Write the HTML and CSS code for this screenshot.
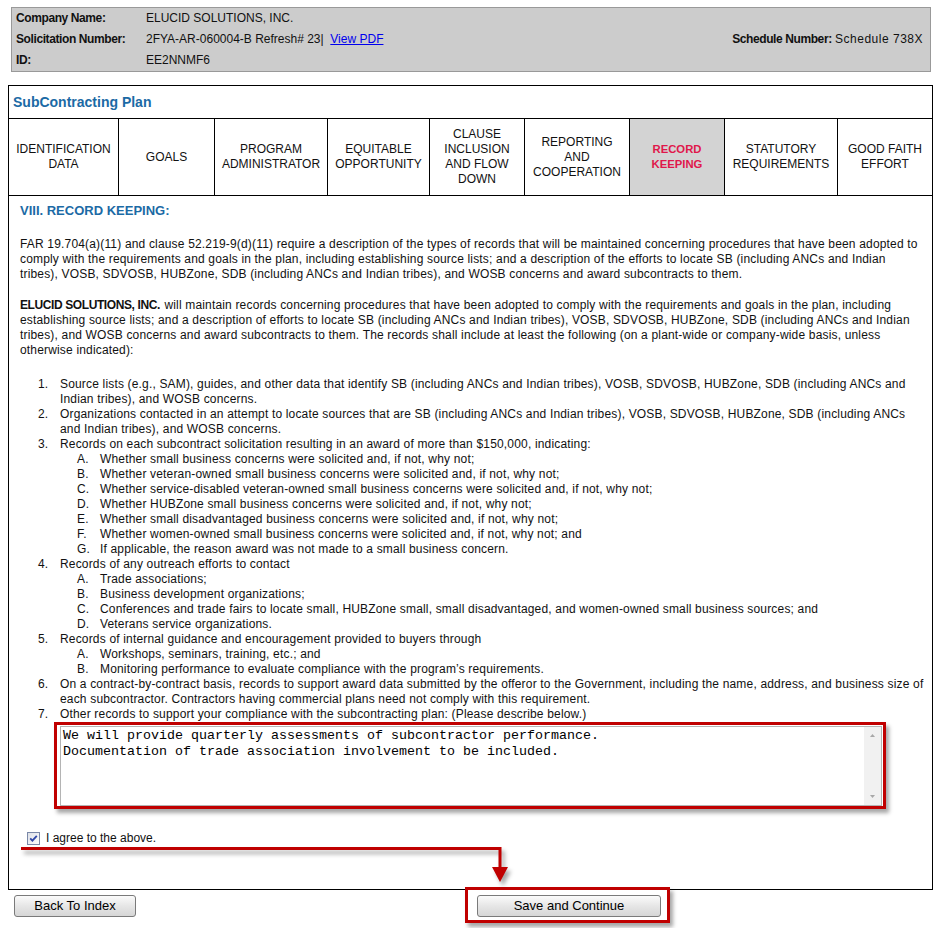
FILE: index.html
```html
<!DOCTYPE html>
<html>
<head>
<meta charset="utf-8">
<link rel="stylesheet" href="styles.css">
</head>
<body>
<div class="page">
  <div class="header">
    <div class="hrow"><span class="hl">Company Name:</span><span class="hv">ELUCID SOLUTIONS, INC.</span><span></span></div>
    <div class="hrow"><span class="hl">Solicitation Number:</span><span class="hv">2FYA-AR-060004-B Refresh# 23|&nbsp; <a href="#">View PDF</a></span><span class="hs"><span class="hl">Schedule Number:</span> <span class="hsv">Schedule 738X</span></span></div>
    <div class="hrow"><span class="hl">ID:</span><span class="hv">EE2NNMF6</span><span></span></div>
  </div>

  <div class="panel">
    <div class="title">SubContracting Plan</div>
    <div class="tabs">
      <div class="tab">IDENTIFICATION<br>DATA</div>
      <div class="tab">GOALS</div>
      <div class="tab">PROGRAM<br>ADMINISTRATOR</div>
      <div class="tab">EQUITABLE<br>OPPORTUNITY</div>
      <div class="tab">CLAUSE<br>INCLUSION<br>AND FLOW<br>DOWN</div>
      <div class="tab">REPORTING<br>AND<br>COOPERATION</div>
      <div class="tab active">RECORD<br>KEEPING</div>
      <div class="tab">STATUTORY<br>REQUIREMENTS</div>
      <div class="tab">GOOD FAITH<br>EFFORT</div>
    </div>
    <div class="content">
      <div class="h2">VIII. RECORD KEEPING:</div>
      <p class="p1">FAR 19.704(a)(11) and clause 52.219-9(d)(11) require a description of the types of records that will be maintained concerning procedures that have been adopted to comply with the requirements and goals in the plan, including establishing source lists; and a description of the efforts to locate SB (including ANCs and Indian tribes), VOSB, SDVOSB, HUBZone, SDB (including ANCs and Indian tribes), and WOSB concerns and award subcontracts to them.</p>
      <p class="p2"><span class="b">ELUCID SOLUTIONS, INC.</span> will maintain records concerning procedures that have been adopted to comply with the requirements and goals in the plan, including establishing source lists; and a description of efforts to locate SB (including ANCs and Indian tribes), VOSB, SDVOSB, HUBZone, SDB (including ANCs and Indian tribes), and WOSB concerns and award subcontracts to them. The records shall include at least the following (on a plant-wide or company-wide basis, unless otherwise indicated):</p>
      <ol class="main">
        <li><span class="num">1.</span><div class="txt">Source lists (e.g., SAM), guides, and other data that identify SB (including ANCs and Indian tribes), VOSB, SDVOSB, HUBZone, SDB (including ANCs and Indian tribes), and WOSB concerns.</div></li>
        <li><span class="num">2.</span><div class="txt">Organizations contacted in an attempt to locate sources that are SB (including ANCs and Indian tribes), VOSB, SDVOSB, HUBZone, SDB (including ANCs and Indian tribes), and WOSB concerns.</div></li>
        <li><span class="num">3.</span><div class="txt">Records on each subcontract solicitation resulting in an award of more than $150,000, indicating:
          <ol class="sub">
            <li><span class="let">A.</span><div>Whether small business concerns were solicited and, if not, why not;</div></li>
            <li><span class="let">B.</span><div>Whether veteran-owned small business concerns were solicited and, if not, why not;</div></li>
            <li><span class="let">C.</span><div>Whether service-disabled veteran-owned small business concerns were solicited and, if not, why not;</div></li>
            <li><span class="let">D.</span><div>Whether HUBZone small business concerns were solicited and, if not, why not;</div></li>
            <li><span class="let">E.</span><div>Whether small disadvantaged business concerns were solicited and, if not, why not;</div></li>
            <li><span class="let">F.</span><div>Whether women-owned small business concerns were solicited and, if not, why not; and</div></li>
            <li><span class="let">G.</span><div>If applicable, the reason award was not made to a small business concern.</div></li>
          </ol></div></li>
        <li><span class="num">4.</span><div class="txt">Records of any outreach efforts to contact
          <ol class="sub">
            <li><span class="let">A.</span><div>Trade associations;</div></li>
            <li><span class="let">B.</span><div>Business development organizations;</div></li>
            <li><span class="let">C.</span><div>Conferences and trade fairs to locate small, HUBZone small, small disadvantaged, and women-owned small business sources; and</div></li>
            <li><span class="let">D.</span><div>Veterans service organizations.</div></li>
          </ol></div></li>
        <li><span class="num">5.</span><div class="txt">Records of internal guidance and encouragement provided to buyers through
          <ol class="sub">
            <li><span class="let">A.</span><div>Workshops, seminars, training, etc.; and</div></li>
            <li><span class="let">B.</span><div>Monitoring performance to evaluate compliance with the program’s requirements.</div></li>
          </ol></div></li>
        <li><span class="num">6.</span><div class="txt">On a contract-by-contract basis, records to support award data submitted by the offeror to the Government, including the name, address, and business size of each subcontractor. Contractors having commercial plans need not comply with this requirement.</div></li>
        <li><span class="num">7.</span><div class="txt">Other records to support your compliance with the subcontracting plan: (Please describe below.)
          <div class="annot">
            <div class="ta-frame">
              <textarea class="ta" spellcheck="false">We will provide quarterly assessments of subcontractor performance.
Documentation of trade association involvement to be included.</textarea>
              <div class="sb">
                <svg width="17" height="17" viewBox="0 0 17 17"><path d="M6 10 L8.5 7 L11 10 Z" fill="#a8a8a8"/></svg>
                <svg width="17" height="17" viewBox="0 0 17 17"><path d="M6 7 L8.5 10 L11 7 Z" fill="#a8a8a8"/></svg>
              </div>
            </div>
          </div>
        </div></li>
      </ol>
      <label class="agree">
        <span class="cb"><svg width="13" height="13" viewBox="0 0 13 13"><defs><linearGradient id="g" x1="0" y1="0" x2="1" y2="1"><stop offset="0" stop-color="#dcdfe6"/><stop offset="1" stop-color="#ffffff"/></linearGradient></defs><rect x="0.5" y="0.5" width="12" height="12" fill="url(#g)" stroke="#7a88a8"/><path d="M3.2 6.4 L5.4 8.7 L9.8 3.8" fill="none" stroke="#3048a8" stroke-width="1.8"/></svg></span>
        <span>I agree to the above.</span>
      </label>
    </div>
  </div>

  <div class="btns">
    <button class="btn back">Back To Index</button>
    <div class="save-wrap"><button class="btn save">Save and Continue</button></div>
  </div>

  <svg class="arrow" width="942" height="928" viewBox="0 0 942 928">
    <polyline points="21,848.5 500,848.5 500,869" fill="none" stroke="#c00000" stroke-width="3"/>
    <polygon points="492,867 508,867 500,882" fill="#c00000"/>
  </svg>
</div>
</body>
</html>
```
FILE: styles.css
```css
* { box-sizing: border-box; }
body {
  margin: 0;
  font-family: "Liberation Sans", Arial, sans-serif;
  font-size: 12px;
  color: #111;
  background: #fff;
}
.page {
  position: relative;
  width: 942px;
  height: 928px;
  overflow: hidden;
}
.header {
  margin: 7px 11px 0 11px;
  background: #cccccc;
  border: 1px solid #999;
  padding: 0 7px 0 4px;
}
.hrow {
  display: grid;
  grid-template-columns: 130px 1fr auto;
  height: 21px;
  line-height: 21px;
}
.hl { font-weight: bold; letter-spacing: -0.4px; }
.hsv { letter-spacing: 0.5px; }
.hv a { color: #0000ee; text-decoration: underline; }
.panel {
  margin: 13px 0 0 8px;
  width: 925px;
  border: 1px solid #000;
}
.title {
  height: 33px;
  line-height: 32px;
  padding-left: 4px;
  font-size: 14px;
  font-weight: bold;
  color: #1b6aa5;
  border-bottom: 1px solid #000;
}
.tabs {
  display: grid;
  grid-template-columns: 109px 96px 113px 102px 95px 105px 95px 113px 95px;
  height: 77px;
  border-bottom: 1px solid #000;
}
.tab {
  display: flex;
  align-items: center;
  justify-content: center;
  text-align: center;
  line-height: 15px;
  border-left: 1px solid #000;
  padding: 0 2px;
}
.tab:first-child { border-left: none; }
.tab.active {
  background: #d3d3d3;
  color: #e0174b;
  font-weight: bold;
  font-size: 11.3px;
}
.content { padding: 7px 8px 43px 11px; }
.h2 {
  font-size: 13px;
  font-weight: bold;
  color: #1b6aa5;
  line-height: 16px;
}
.p1, .p2, ol.main { letter-spacing: 0.17px; }
.p1 { margin: 18px 0 0; line-height: 15px; }
.p2 { margin: 16px 0 0; line-height: 15px; }
.b { font-weight: bold; letter-spacing: -0.4px; padding-right: 1px; }
ol.main {
  list-style: none;
  margin: 19px 0 0;
  padding: 0 0 0 18px;
}
ol.main li, ol.sub li {
  display: flex;
  line-height: 15px;
}
.num { width: 22px; flex: none; }
.let { width: 23px; flex: none; }
.txt { flex: 1; }
ol.sub {
  list-style: none;
  margin: 0;
  padding: 0 0 0 17px;
}
.annot {
  margin-left: -6px;
  width: 832px;
  border: 3px solid #c00000;
  padding: 1px 1px 0 3px;
  box-shadow: 3px 4px 4px rgba(0, 0, 0, 0.35);
  background: #fff;
  letter-spacing: 0;
}
.ta-frame {
  display: flex;
  height: 80px;
  border: 1px solid #b4b4b4;
  background: #fff;
}
.ta {
  flex: 1;
  border: none;
  outline: none;
  resize: none;
  overflow: hidden;
  padding: 1px 2px;
  margin: 0;
  font-family: "Liberation Mono", "Courier New", monospace;
  font-size: 13.33px;
  line-height: 16px;
  color: #000;
  background: #fff;
  letter-spacing: 0;
}
.sb {
  width: 17px;
  flex: none;
  background: #f1f1f1;
  display: flex;
  flex-direction: column;
  justify-content: space-between;
}
.sb svg { display: block; }
.agree {
  display: flex;
  align-items: center;
  margin: 22px 0 0 7px;
  height: 15px;
  line-height: 15px;
}
.cb { width: 13px; height: 13px; margin-right: 6px; display: block; }
.cb svg { display: block; }
.btns {
  display: flex;
  align-items: flex-start;
}
.btn {
  font-family: "Liberation Sans", Arial, sans-serif;
  font-size: 13px;
  height: 22px;
  border: 1px solid #7a7a7a;
  border-radius: 3px;
  background: linear-gradient(#fbfbfb, #e6e6e6 50%, #d6d6d6);
  color: #000;
  padding: 0 0 1px;
  margin: 0;
}
.back { margin: 5px 0 0 14px; width: 122px; }
.save-wrap {
  margin: -3px 0 0 329px;
  border: 3px solid #c00000;
  padding: 5px 6px 3px 9px;
  box-shadow: 3px 4px 4px rgba(0, 0, 0, 0.35);
  background: #fff;
}
.save { width: 184px; display: block; }
.arrow {
  position: absolute;
  left: 0;
  top: 0;
  pointer-events: none;
  filter: drop-shadow(3px 4px 2px rgba(0, 0, 0, 0.35));
}
```
